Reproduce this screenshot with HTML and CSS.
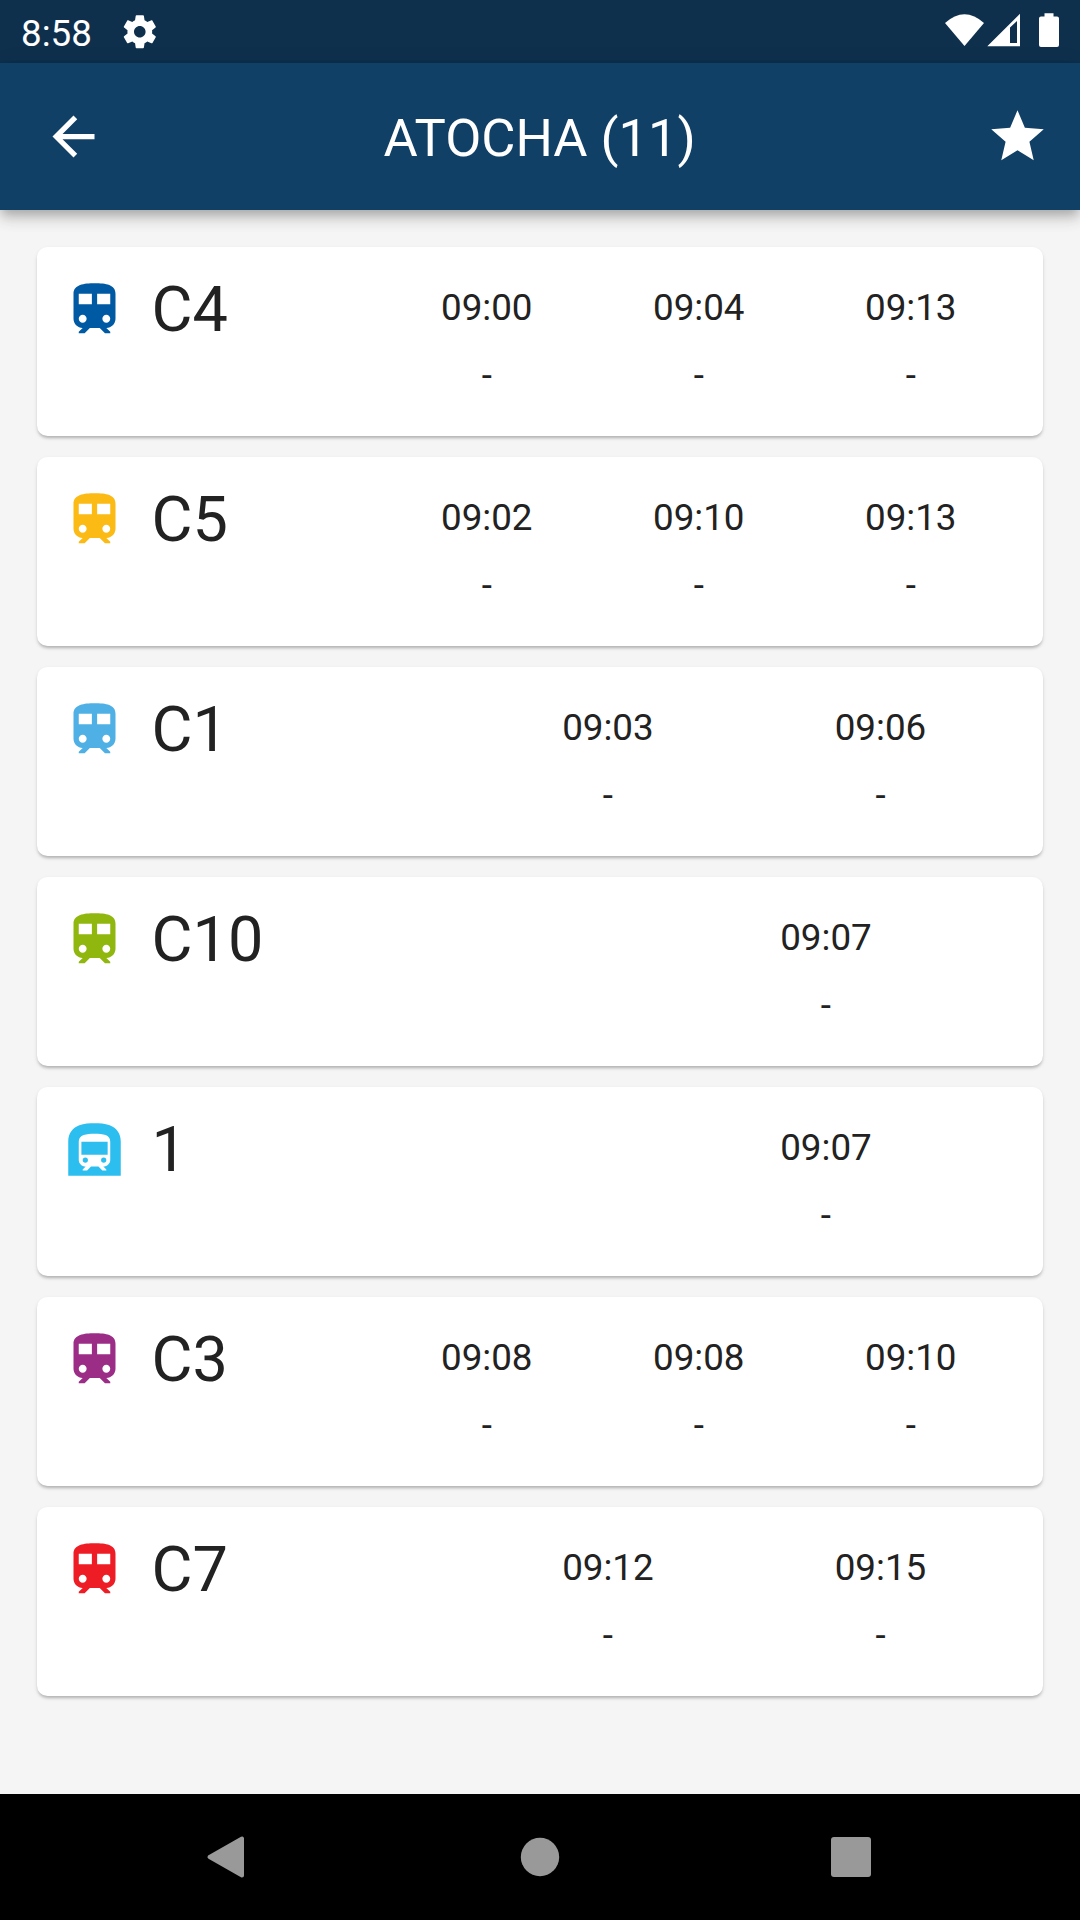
FILE: index.html
```html
<!DOCTYPE html>
<html lang="es">
<head>
<meta charset="utf-8">
<title>ATOCHA (11)</title>
<link rel="stylesheet" href="styles.css">
</head>
<body>
<svg width="0" height="0" class="defs">
  <symbol id="train" viewBox="0 0 24 24"><path d="M12 2c-4 0-8 .5-8 4v9.5C4 17.43 5.57 19 7.5 19L6 20.5v.5h2.23l2-2H14l2 2h2v-.5L16.5 19c1.93 0 3.5-1.57 3.5-3.5V6c0-3.5-3.58-4-8-4zM7.5 17c-.83 0-1.5-.67-1.5-1.5S6.67 14 7.5 14s1.5.67 1.5 1.5S8.33 17 7.5 17zm3.5-7H6V6h5v4zm2 0V6h5v4h-5zm3.5 7c-.83 0-1.5-.67-1.5-1.5s.67-1.5 1.5-1.5 1.5.67 1.5 1.5-.67 1.5-1.5 1.5z"/></symbol>
  <symbol id="subway" viewBox="0 0 24 24"><circle cx="15.5" cy="16" r="1"/><circle cx="8.5" cy="16" r="1"/><path d="M7.01 9h10v5h-10zM17.8 2.8C16 2.09 13.86 2 12 2c-1.86 0-4 .09-5.8.8C3.53 3.84 2 6.05 2 8.86V22h20V8.86c0-2.81-1.53-5.02-4.2-6.06zm.2 13.08c0 1.45-1.18 2.62-2.63 2.62l1.13 1.12V20H15l-1.5-1.5h-2.83L9.17 20H7.5v-.38l1.12-1.12C7.18 18.5 6 17.32 6 15.88V9c0-2.63 3-3 6-3 3.32 0 6 .38 6 3v6.88z"/></symbol>
</svg>
<div class="screen">
  <div class="status">
    <span class="clock">8:58</span>
    <svg class="gear" viewBox="0 0 24 24"><path d="M19.43 12.98c.04-.32.07-.64.07-.98s-.03-.66-.07-.98l2.11-1.65c.19-.15.24-.42.12-.64l-2-3.46c-.12-.22-.39-.3-.61-.22l-2.49 1c-.52-.4-1.08-.73-1.69-.98l-.38-2.65C14.46 2.18 14.25 2 14 2h-4c-.25 0-.46.18-.49.42l-.38 2.65c-.61.25-1.17.59-1.69.98l-2.49-1c-.23-.09-.49 0-.61.22l-2 3.46c-.13.22-.07.49.12.64l2.11 1.65c-.04.32-.07.65-.07.98s.03.66.07.98l-2.11 1.65c-.19.15-.24.42-.12.64l2 3.46c.12.22.39.3.61.22l2.49-1c.52.4 1.08.73 1.69.98l.38 2.65c.03.24.24.42.49.42h4c.25 0 .46-.18.49-.42l.38-2.65c.61-.25 1.17-.59 1.69-.98l2.49 1c.23.09.49 0 .61-.22l2-3.46c.12-.22.07-.49-.12-.64l-2.11-1.65zM12 15.5c-1.93 0-3.5-1.57-3.5-3.5s1.57-3.5 3.5-3.5 3.5 1.57 3.5 3.5-1.57 3.5-3.5 3.5z"/></svg>
    <svg class="signals" viewBox="0 0 116 36"><path d="M0 10Q19.5-7.5 39 10L19.5 33z"/><path fill-rule="evenodd" d="M42.3 33.2L75 .7V33.2zM65 14.5V30H72V8z"/><path d="M99.5.3H108.500V3.500H112Q114 3.500 114 5.500V32Q114 34 112 34H96Q94 34 94 32V5.500Q94 3.500 96 3.500H99.500z"/></svg>
  </div>
  <header class="appbar">
    <svg class="back" viewBox="0 0 24 24"><path d="M20 11H7.83l5.59-5.59L12 4l-8 8 8 8 1.41-1.41L7.83 13H20v-2z"/></svg>
    <h1>ATOCHA (11)</h1>
    <svg class="star" viewBox="0 0 24 24"><path d="M12 17.27L18.18 21l-1.64-7.03L22 9.24l-7.19-.61L12 2 9.19 8.63 2 9.24l5.46 4.73L5.82 21z"/></svg>
  </header>
  <main class="list">
    <section class="card"><div class="line c4"><svg><use href="#train"/></svg><h2>C4</h2></div><div class="times n3"><p>09:00<span>-</span></p><p>09:04<span>-</span></p><p>09:13<span>-</span></p></div></section>
    <section class="card"><div class="line c5"><svg><use href="#train"/></svg><h2>C5</h2></div><div class="times n3"><p>09:02<span>-</span></p><p>09:10<span>-</span></p><p>09:13<span>-</span></p></div></section>
    <section class="card"><div class="line c1"><svg><use href="#train"/></svg><h2>C1</h2></div><div class="times n2"><p>09:03<span>-</span></p><p>09:06<span>-</span></p></div></section>
    <section class="card"><div class="line c10"><svg><use href="#train"/></svg><h2>C10</h2></div><div class="times n1"><p>09:07<span>-</span></p></div></section>
    <section class="card"><div class="line m1"><svg><use href="#subway"/></svg><h2>1</h2></div><div class="times n1"><p>09:07<span>-</span></p></div></section>
    <section class="card"><div class="line c3"><svg><use href="#train"/></svg><h2>C3</h2></div><div class="times n3"><p>09:08<span>-</span></p><p>09:08<span>-</span></p><p>09:10<span>-</span></p></div></section>
    <section class="card"><div class="line c7"><svg><use href="#train"/></svg><h2>C7</h2></div><div class="times n2"><p>09:12<span>-</span></p><p>09:15<span>-</span></p></div></section>
  </main>
  <nav class="navbar">
    <svg viewBox="0 0 46 46"><path d="M36 4.500V41.500L3.500 23z" stroke-width="4" stroke-linejoin="round"/></svg>
    <svg viewBox="0 0 46 46"><circle cx="23" cy="23" r="19.2"/></svg>
    <svg viewBox="0 0 46 46"><rect x="3" y="3" width="40" height="40" rx="3"/></svg>
  </nav>
</div>
</body>
</html>
```
FILE: styles.css
```css
* { box-sizing: border-box; margin: 0; padding: 0; }
body { font-family: Roboto, sans-serif; background: #f5f5f5; color: #222; }
h1, h2 { font-weight: 400; }
svg { display: block; flex: none; fill: currentColor; }
.defs { position: absolute; }
.screen { width: 1080px; height: 1920px; display: flex; flex-direction: column; overflow: hidden; }

.status { height: 63px; background: #0e304d; color: #fff; display: flex; align-items: center; padding: 2px 19px 0 21px; }
.clock { font-size: 36.75px; line-height: 42px; padding-top: 2px; }
.gear { width: 39.6px; height: 39.6px; margin: -2px 0 0 28.5px; }
.signals { width: 116px; height: 36px; margin: -4px 0 0 auto; }

.appbar { height: 147px; background: #114067; color: #fff; display: grid; grid-template-columns: 63px 1fr 63px; align-items: center; padding: 0 31.5px 0 42px; box-shadow: 0 5px 10px -2px rgba(0,0,0,.2), 0 10px 13px rgba(0,0,0,.12), 0 3px 22px rgba(0,0,0,.08); z-index: 1; }
.back, .star { width: 63px; height: 63px; }
.appbar h1 { font-size: 52.5px; line-height: 62px; text-align: center; padding: 2px 11px 0 0; }

.list { flex: 1; padding: 37px 37px 0; display: flex; flex-direction: column; gap: 21.5px; }
.card { height: 188.5px; background: #fff; border-radius: 10.5px; display: flex; padding: 26.25px 26.25px 26.25px 25.75px; box-shadow: 0 3px 3px -1px rgba(0,0,0,.2), 0 2px 4px rgba(0,0,0,.1); }
.line { flex: 3 1 0; display: flex; align-items: flex-start; gap: 25.75px; }
.line svg { width: 63px; height: 63px; margin-top: 5px; }
.line h2 { font-size: 63px; line-height: 74px; color: #222; }
.times { display: flex; }
.times p { flex: 1 1 0; text-align: center; font-size: 36.75px; line-height: 43px; padding-top: 13px; }
.times span { display: block; margin-top: 25px; }
.n1 { flex: 2 1 0; }
.n2 { flex: 4 1 0; }
.n3 { flex: 6 1 0; }
.c4 { color: #005aa3; }
.c5 { color: #fbba14; }
.c1 { color: #4fb0e5; }
.c10 { color: #90b70e; }
.m1 { color: #2dbef0; }
.c3 { color: #9b2d86; }
.c7 { color: #ee1c24; }

.navbar { height: 126px; background: #000; color: #999; display: flex; align-items: center; justify-content: space-between; padding: 0 206px; }
.navbar svg { width: 46px; height: 46px; }
.navbar path { stroke: currentColor; }
```
